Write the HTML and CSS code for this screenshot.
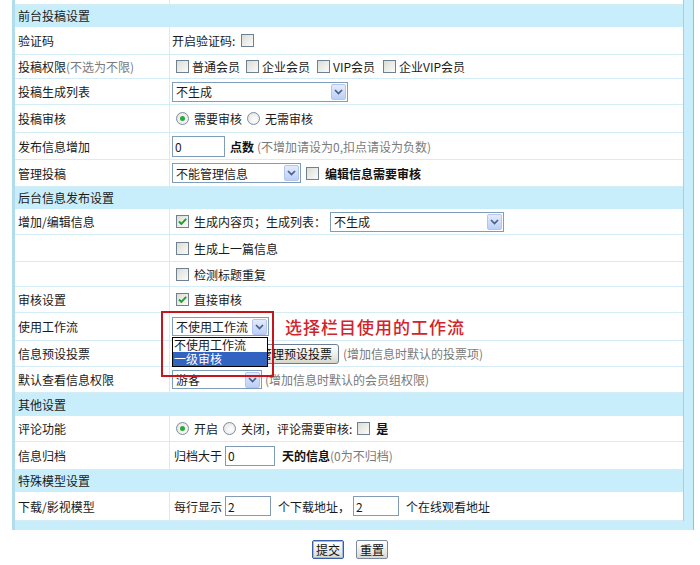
FILE: index.html
```html
<!DOCTYPE html>
<html lang="zh-CN">
<head>
<meta charset="utf-8">
<title>栏目设置</title>
<link rel="stylesheet" href="styles.css">
</head>
<body>
<div class="frame">
  <div class="grid">
    <div class="row h5"><div class="lab"></div><div class="val"></div></div>
    <div class="row head h22"><span>前台投稿设置</span></div>
    <div class="row h28"><div class="lab">验证码</div><div class="val">开启验证码:<span class="cb ml6"></span></div></div>
    <div class="row h24"><div class="lab">投稿权限<span class="grey">(不选为不限)</span></div>
      <div class="val"><span class="cb ml4"></span><span class="ml3">普通会员</span><span class="cb ml6"></span><span class="ml3">企业会员</span><span class="cb ml7"></span><span class="ml3">VIP会员</span><span class="cb ml8"></span><span class="ml3">企业VIP会员</span></div></div>
    <div class="row h26"><div class="lab">投稿生成列表</div><div class="val"><div class="sel w176"><span class="st">不生成</span><span class="sb"><svg viewBox="0 0 9 6"><path d="M1 1l3.5 3.5L8 1"/></svg></span></div></div></div>
    <div class="row h28"><div class="lab">投稿审核</div><div class="val"><span class="rd on ml4"></span><span class="ml5">需要审核</span><span class="rd ml5"></span><span class="ml5">无需审核</span></div></div>
    <div class="row h27"><div class="lab">发布信息增加</div><div class="val"><span class="inp w53">0</span><span class="b ml5">点数</span><span class="grey ml3">(不增加请设为0,扣点请设为负数)</span></div></div>
    <div class="row h27"><div class="lab">管理投稿</div><div class="val"><div class="sel w129"><span class="st">不能管理信息</span><span class="sb"><svg viewBox="0 0 9 6"><path d="M1 1l3.5 3.5L8 1"/></svg></span></div><span class="cb ml5"></span><span class="b ml6">编辑信息需要审核</span></div></div>
    <div class="row head h22"><span>后台信息发布设置</span></div>
    <div class="row h26"><div class="lab">增加/编辑信息</div><div class="val"><span class="cb on ml4"><svg viewBox="0 0 11 11"><path d="M2 5.5l2.4 2.4L9.2 2.8"/></svg></span><span class="ml5">生成内容页；生成列表：</span><div class="sel w174 ml4"><span class="st">不生成</span><span class="sb"><svg viewBox="0 0 9 6"><path d="M1 1l3.5 3.5L8 1"/></svg></span></div></div></div>
    <div class="row h27"><div class="lab"></div><div class="val"><span class="cb ml4"></span><span class="ml5">生成上一篇信息</span></div></div>
    <div class="row h25"><div class="lab"></div><div class="val"><span class="cb ml4"></span><span class="ml5">检测标题重复</span></div></div>
    <div class="row h26"><div class="lab">审核设置</div><div class="val"><span class="cb on ml4"><svg viewBox="0 0 11 11"><path d="M2 5.5l2.4 2.4L9.2 2.8"/></svg></span><span class="ml5">直接审核</span></div></div>
    <div class="row h28 top"><div class="lab">使用工作流</div><div class="val">
      <div class="sel w97 wf"><span class="st">不使用工作流</span><span class="sb"><svg viewBox="0 0 9 6"><path d="M1 1l3.5 3.5L8 1"/></svg></span>
        <div class="drop"><div class="opt">不使用工作流</div><div class="opt cur">一级审核</div></div>
      </div>
      <span class="note">选择栏目使用的工作流</span>
      <div class="redbox"></div>
    </div></div>
    <div class="row h26"><div class="lab">信息预设投票</div><div class="val"><div class="sel w78"><span class="st"></span><span class="sb"><svg viewBox="0 0 9 6"><path d="M1 1l3.5 3.5L8 1"/></svg></span></div><span class="btn ml3">管理预设投票</span><span class="grey ml4">(增加信息时默认的投票项)</span></div></div>
    <div class="row h26"><div class="lab">默认查看信息权限</div><div class="val"><div class="sel w90"><span class="st">游客</span><span class="sb"><svg viewBox="0 0 9 6"><path d="M1 1l3.5 3.5L8 1"/></svg></span></div><span class="grey ml3">(增加信息时默认的会员组权限)</span></div></div>
    <div class="row head h23"><span>其他设置</span></div>
    <div class="row h26"><div class="lab">评论功能</div><div class="val"><span class="rd on ml4"></span><span class="ml5">开启</span><span class="rd ml5"></span><span class="ml5">关闭，评论需要审核:</span><span class="cb ml5"></span><span class="b ml6">是</span></div></div>
    <div class="row h28"><div class="lab">信息归档</div><div class="val"><span>归档大于</span><span class="inp w50 ml3">0</span><span class="b ml7">天的信息</span><span class="grey">(0为不归档)</span></div></div>
    <div class="row head h22"><span>特殊模型设置</span></div>
    <div class="row h29"><div class="lab">下载/影视模型</div><div class="val"><span>每行显示</span><span class="inp w46 ml3">2</span><span class="ml7">个下载地址，</span><span class="inp w46 ml3">2</span><span class="ml7">个在线观看地址</span></div></div>
  </div>
</div>
<div class="actions">
  <span class="btn sub">提交</span>
  <span class="btn">重置</span>
</div>
</body>
</html>
```

FILE: styles.css
```css
html, body {
  margin: 0;
  padding: 0;
  background: #fff;
}
body {
  font-family: "Noto Sans CJK SC", "Liberation Sans", sans-serif;
  font-size: 12px;
  color: #1a1a1a;
  width: 700px;
  height: 565px;
  overflow: hidden;
}
.frame {
  margin-left: 12px;
  width: 682px;
  box-sizing: border-box;
  border-left: 3px solid #b0dcee;
  border-right: 1px solid #8fc2d8;
  background: #c9eefb;
  padding-right: 9px;
  padding-bottom: 9px;
}
.grid {
  background: #fff;
  border-right: 1px solid #a3d0e3;
}
.row {
  display: flex;
  align-items: stretch;
  box-sizing: border-box;
  border-bottom: 1px solid #d3ecf6;
}
.row.top { position: relative; z-index: 2; }
.head {
  background: #c9eefb;
  align-items: center;
  padding-left: 3px;
  border-bottom-color: #c9eefb;
}
.lab {
  width: 155px;
  flex: none;
  box-sizing: border-box;
  border-right: 1px solid #d3ecf6;
  padding-left: 3px;
  display: flex;
  align-items: center;
  white-space: nowrap;
}
.val {
  flex: 1;
  display: flex;
  align-items: center;
  padding-left: 2px;
  white-space: nowrap;
  position: relative;
}
.h5 { height: 5px; }
.h22 { height: 22px; }
.h23 { height: 23px; }
.h24 { height: 24px; }
.h25 { height: 25px; }
.h26 { height: 26px; }
.h27 { height: 27px; }
.h28 { height: 28px; }
.h29 { height: 29px; }
.val > span:first-child:not(.cb):not(.rd):not(.inp) { padding-left: 2px; }
.grey { color: #7a7a7a; }
.b { font-weight: bold; color: #111; }
.ml2 { margin-left: 2px; }
.ml3 { margin-left: 3px; }
.ml4 { margin-left: 4px; }
.ml5 { margin-left: 5px; }
.ml6 { margin-left: 6px; }
.ml7 { margin-left: 7px; }
.ml8 { margin-left: 8px; }

.cb {
  display: inline-flex;
  width: 13px;
  height: 13px;
  box-sizing: border-box;
  border: 1px solid #6f8191;
  background: linear-gradient(135deg, #dcdcd6, #fbfbfa);
  flex: none;
  align-items: center;
  justify-content: center;
}
.cb svg { width: 11px; height: 11px; }
.cb svg path { stroke: #21a121; stroke-width: 1.9; fill: none; }
.rd {
  display: inline-block;
  width: 13px;
  height: 13px;
  box-sizing: border-box;
  border: 1px solid #7d8d9c;
  border-radius: 50%;
  background: radial-gradient(circle at 60% 60%, #fff, #dedede);
  flex: none;
  position: relative;
}
.rd.on::after {
  content: "";
  position: absolute;
  left: 3px;
  top: 3px;
  width: 5px;
  height: 5px;
  border-radius: 50%;
  background: #2aa83a;
}

.sel {
  display: inline-flex;
  align-items: center;
  height: 20px;
  box-sizing: border-box;
  border: 1px solid #7f9db9;
  background: #fff;
  flex: none;
  position: relative;
}
.st { flex: 1; padding-left: 3px; overflow: hidden; }
.sb {
  width: 15px;
  height: 16px;
  margin-right: 1px;
  box-sizing: border-box;
  border: 1px solid #b4c6ee;
  border-radius: 2px;
  background: linear-gradient(#e3ebfd, #bccff8);
  display: flex;
  align-items: center;
  justify-content: center;
}
.sb svg { width: 9px; height: 6px; }
.sb svg path { stroke: #4b5f86; stroke-width: 1.7; fill: none; }
.w176 { width: 176px; }
.w174 { width: 174px; }
.w129 { width: 129px; }
.w97 { width: 97px; height: 19px; }
.w90 { width: 90px; height: 19px; }
.w78 { width: 78px; }

.inp {
  display: inline-flex;
  align-items: center;
  box-sizing: border-box;
  height: 21px;
  border: 1px solid #7f9db9;
  padding-left: 2px;
  background: #fff;
  flex: none;
}
.w53 { width: 53px; }
.w50 { width: 50px; height: 20px; }
.w46 { width: 46px; height: 20px; }

.btn {
  display: inline-flex;
  align-items: center;
  justify-content: center;
  height: 20px;
  box-sizing: border-box;
  padding: 0 6px;
  border: 1px solid #6d7e94;
  border-radius: 3px;
  background: linear-gradient(#ffffff, #ecece6 60%, #d6d6cc);
  color: #111;
  flex: none;
}

.drop {
  position: absolute;
  left: -1px;
  top: 19px;
  width: 96px;
  box-sizing: border-box;
  border: 1px solid #000;
  background: #fff;
  z-index: 5;
}
.opt { height: 14px; line-height: 14px; padding-left: 1px; font-size: 12px; }
.opt.cur { background: #3263c0; color: #fff; }

.note {
  margin-left: 16px;
  color: #d2232d;
  font-size: 17px;
  letter-spacing: 1px;
  font-weight: 500;
}
.redbox {
  position: absolute;
  left: -9px;
  top: -2px;
  width: 113px;
  height: 66px;
  box-sizing: border-box;
  border: 2px solid #c3161d;
  z-index: 6;
  pointer-events: none;
}

.actions {
  display: flex;
  justify-content: center;
  gap: 12px;
  padding-top: 10px;
}
.actions .btn {
  height: 19px;
  padding: 0 3px;
  border-radius: 2px;
  border-color: #7b8aa3;
}
.actions .btn.sub {
  border: 1px solid #3b5ea8;
  box-shadow: inset 0 0 0 1px #9fb8e6;
}
```
